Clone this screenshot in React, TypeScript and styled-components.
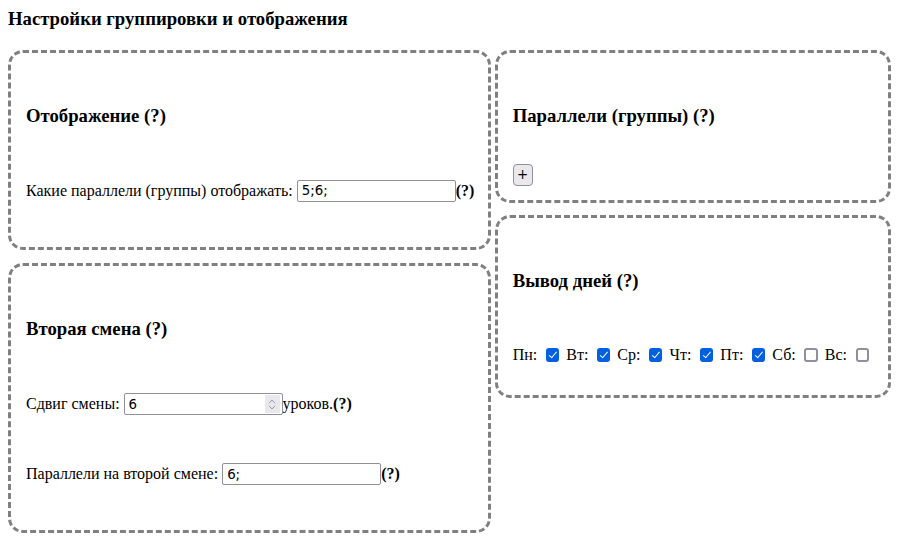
import React from "react";
import styled, { createGlobalStyle } from "styled-components";

const GlobalStyle = createGlobalStyle`
  body {
    margin: 8px;
    font-family: "Liberation Serif", "Times New Roman", serif;
    font-size: 16px;
    color: #000;
    background: #fff;
  }
`;

const PageTitle = styled.h3`
  margin: 0 0 20.5px;
  font-size: 18.72px;
  line-height: 21.5px;
  font-weight: bold;
`;

const Columns = styled.div`
  display: grid;
  grid-template-columns: minmax(0, 482.5fr) minmax(0, 396fr);
  column-gap: 4.2px;
  padding-right: 6.3px;
  align-items: start;
`;

const Column = styled.div<{ $gap: number }>`
  display: flex;
  flex-direction: column;
  min-width: 0;
  gap: ${(p) => p.$gap}px;
`;

const Box = styled.section<{ $bottom: number }>`
  border: 3px dashed gray;
  border-radius: 15px;
  padding: 0 15px ${(p) => p.$bottom}px;
`;

const SectionTitle = styled.h3`
  margin: 52.3px 0 0;
  font-size: 18.72px;
  line-height: 21.5px;
  font-weight: bold;
`;

const Row = styled.div<{ $top: number }>`
  display: flex;
  align-items: center;
  min-height: 18.4px;
  margin-top: ${(p) => p.$top}px;
  white-space: pre;
`;

const Hint = styled.b`
  font-weight: bold;
`;

const TextInput = styled.input`
  box-sizing: border-box;
  width: 159px;
  height: 22px;
  margin: 0 0 0 4px;
  padding: 0 4px;
  border: 1px solid #8f8f9d;
  border-radius: 2px;
  font-family: "DejaVu Sans", sans-serif;
  font-size: 13.33px;
  color: #000;
  background: #fff;
  outline: none;

  &::-webkit-inner-spin-button,
  &::-webkit-outer-spin-button {
    -webkit-appearance: none;
    margin: 0;
  }
`;

const NumberWrap = styled.span`
  position: relative;
  display: inline-flex;
`;

const Spinner = styled.span`
  position: absolute;
  top: 2px;
  right: 3px;
  bottom: 2px;
  width: 15px;
  display: flex;
  flex-direction: column;
  align-items: center;
  justify-content: center;
  gap: 1px;
  background: #e9e9ed;
  pointer-events: none;
`;

const AddButton = styled.button`
  box-sizing: border-box;
  width: 20px;
  height: 22px;
  padding: 0;
  border: 1px solid #8f8f9d;
  border-radius: 4px;
  background: #e9e9ed;
  font-family: "DejaVu Sans", sans-serif;
  font-size: 13.33px;
  color: #000;
  line-height: 1;
`;

const DayCheck = styled.input`
  appearance: none;
  box-sizing: border-box;
  position: relative;
  flex: none;
  width: 13.5px;
  height: 13.5px;
  margin: 0 7px 0 8.5px;
  border: 2px solid #8f8f9d;
  border-radius: 3px;
  background: #fff;

  &:checked {
    border-color: #0060df;
    background: #0060df;
  }

  &:checked::after {
    content: "";
    position: absolute;
    left: 2.8px;
    top: 0px;
    width: 3px;
    height: 6.5px;
    border: solid #fff;
    border-width: 0 1.6px 1.6px 0;
    transform: rotate(40deg);
  }
`;

const Chevron = ({ up }: { up?: boolean }) => (
  <svg width="8" height="5" viewBox="0 0 8 5">
    <path
      d={up ? "M1 4.2 L4 1 L7 4.2" : "M1 0.8 L4 4 L7 0.8"}
      fill="none"
      stroke="#9a9aa6"
      strokeWidth="1"
    />
  </svg>
);

const days: [string, boolean][] = [
  ["Пн:", true],
  ["Вт:", true],
  ["Ср:", true],
  ["Чт:", true],
  ["Пт:", true],
  ["Сб:", false],
  ["Вс:", false],
];

export default function App() {
  return (
    <>
      <GlobalStyle />
      <PageTitle>Настройки группировки и отображения</PageTitle>
      <Columns>
        <Column $gap={12.8}>
          <Box $bottom={45}>
            <SectionTitle>Отображение (?)</SectionTitle>
            <Row $top={53.2}>
              Какие параллели (группы) отображать:
              <TextInput type="text" defaultValue="5;6;" />
              <Hint>(?)</Hint>
            </Row>
          </Box>
          <Box $bottom={44.7}>
            <SectionTitle>Вторая смена (?)</SectionTitle>
            <Row $top={53.5}>
              Сдвиг смены:
              <NumberWrap>
                <TextInput type="number" defaultValue={6} />
                <Spinner>
                  <Chevron up />
                  <Chevron />
                </Spinner>
              </NumberWrap>
              уроков.<Hint>(?)</Hint>
            </Row>
            <Row $top={48}>
              Параллели на второй смене:
              <TextInput type="text" defaultValue="6;" />
              <Hint>(?)</Hint>
            </Row>
          </Box>
        </Column>
        <Column $gap={12.2}>
          <Box $bottom={14}>
            <SectionTitle>Параллели (группы) (?)</SectionTitle>
            <Row $top={37.2}>
              <AddButton type="button">+</AddButton>
            </Row>
          </Box>
          <Box $bottom={31}>
            <SectionTitle>Вывод дней (?)</SectionTitle>
            <Row $top={54}>
              {days.map(([label, on]) => (
                <React.Fragment key={label}>
                  {label}
                  <DayCheck type="checkbox" defaultChecked={on} />
                </React.Fragment>
              ))}
            </Row>
          </Box>
        </Column>
      </Columns>
    </>
  );
}
